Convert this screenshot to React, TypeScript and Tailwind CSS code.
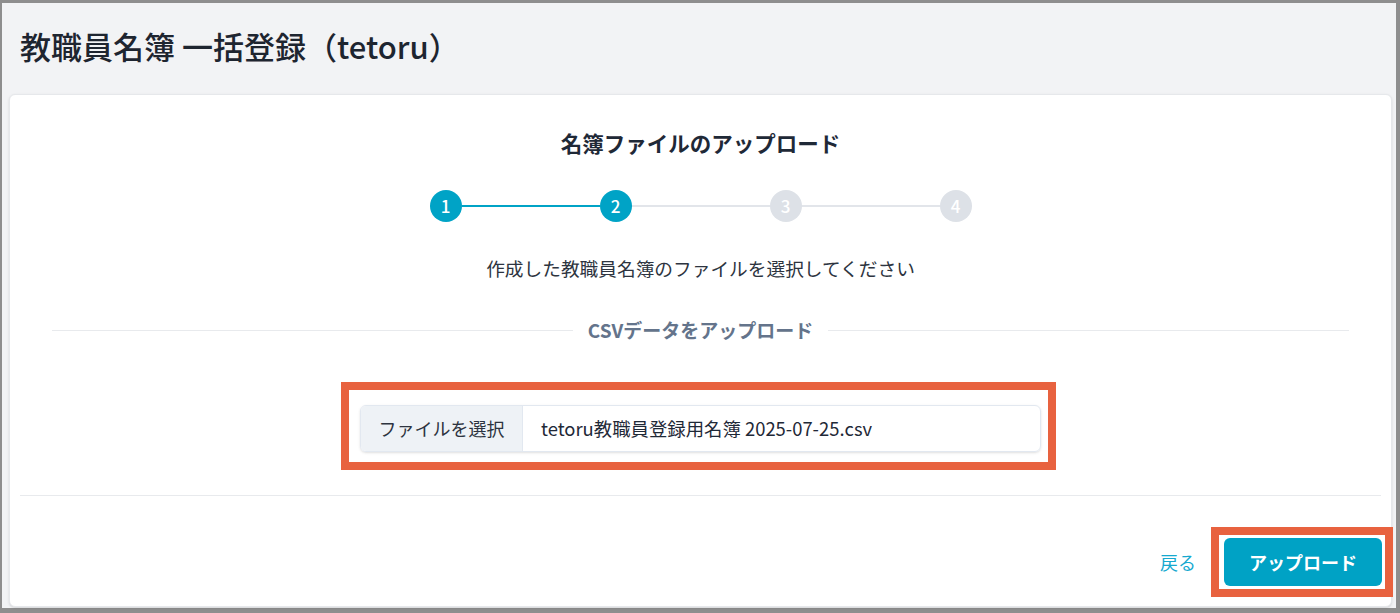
import React from 'react';

const steps = [1, 2, 3, 4];
const current = 2;

const StepIndicator: React.FC = () => (
    <div className="flex items-center justify-center">
        {steps.map((n, i) => (
            <React.Fragment key={n}>
                {i > 0 && (
                    <div className={`w-[138px] h-[2px] ${n <= current ? 'bg-[#00a3c6]' : 'bg-[#e2e5ea]'}`} />
                )}
                <div
                    className={`w-8 h-8 rounded-full flex items-center justify-center text-[17px] font-medium text-white ${
                        n <= current ? 'bg-[#00a3c6]' : 'bg-[#dde1e7]'
                    }`}
                >
                    {n}
                </div>
            </React.Fragment>
        ))}
    </div>
);

export default function App() {
    return (
        <div
            className="w-[1400px] h-[613px] bg-[#8e8e8e] pt-[3px] pl-[2px] pr-[4px] pb-[5px]"
            style={{ fontFamily: '"Noto Sans CJK JP", "Noto Sans", sans-serif' }}
        >
            <div className="h-full bg-[#f2f3f5] flex flex-col pl-[7px] pr-[4px] pb-[1px]">
                {/* Page title */}
                <h1 className="h-[91px] pl-[11px] pt-[23px] text-[31px] leading-[40px] font-medium text-[#1e2530]">
                    教職員名簿 一括登録（tetoru）
                </h1>

                {/* Card */}
                <div className="flex-1 bg-white border border-[#e6e8eb] rounded-md shadow-sm flex flex-col">
                    <h2 className="pt-[34px] text-center text-[21.5px] leading-[28px] font-bold text-[#1f2937]">
                        名簿ファイルのアップロード
                    </h2>

                    <div className="mt-[33px]">
                        <StepIndicator />
                    </div>

                    <p className="mt-[32px] text-center text-[18.7px] leading-[28px] text-[#2d3440]">
                        作成した教職員名簿のファイルを選択してください
                    </p>

                    {/* Section divider */}
                    <div className="mt-[36px] px-[42px] flex items-center gap-[15px]">
                        <div className="flex-1 h-px bg-[#e8eaed]" />
                        <span className="text-[19px] leading-[24px] font-bold text-[#64748b]">
                            CSVデータをアップロード
                        </span>
                        <div className="flex-1 h-px bg-[#e8eaed]" />
                    </div>

                    {/* File input */}
                    <div className="mt-[63px] flex justify-center">
                        <div className="relative w-[681px]">
                            <div className="h-[47px] flex border border-[#e2e8f0] rounded-md shadow-sm overflow-hidden">
                                <div className="w-[162px] bg-[#eef2f6] border-r border-[#e2e8f0] flex items-center justify-center text-[18px] text-[#2d3440]">
                                    ファイルを選択
                                </div>
                                <div className="flex-1 flex items-center pl-[18px] text-[18.4px] text-[#1f2937]">
                                    tetoru教職員登録用名簿 2025-07-25.csv
                                </div>
                            </div>
                            <div className="absolute left-[-19px] top-[-23px] right-[-15px] bottom-[-18px] border-[8px] border-[#e8623f] pointer-events-none" />
                        </div>
                    </div>

                    <div className="mt-[43px] mx-[10px] h-px bg-[#e8eaed]" />

                    {/* Footer */}
                    <div className="mt-[42px] pr-[9px] flex items-center justify-end gap-[28px]">
                        <button className="text-[18px] text-[#16a9cf]">戻る</button>
                        <div className="relative">
                            <button className="w-[158px] h-[48px] rounded-md bg-[#00a2c5] text-white text-[18px] font-bold">
                                アップロード
                            </button>
                            <div className="absolute left-[-13px] top-[-11px] right-[-11px] bottom-[-11px] border-[8px] border-[#e8623f] pointer-events-none" />
                        </div>
                    </div>
                </div>
            </div>
        </div>
    );
}
